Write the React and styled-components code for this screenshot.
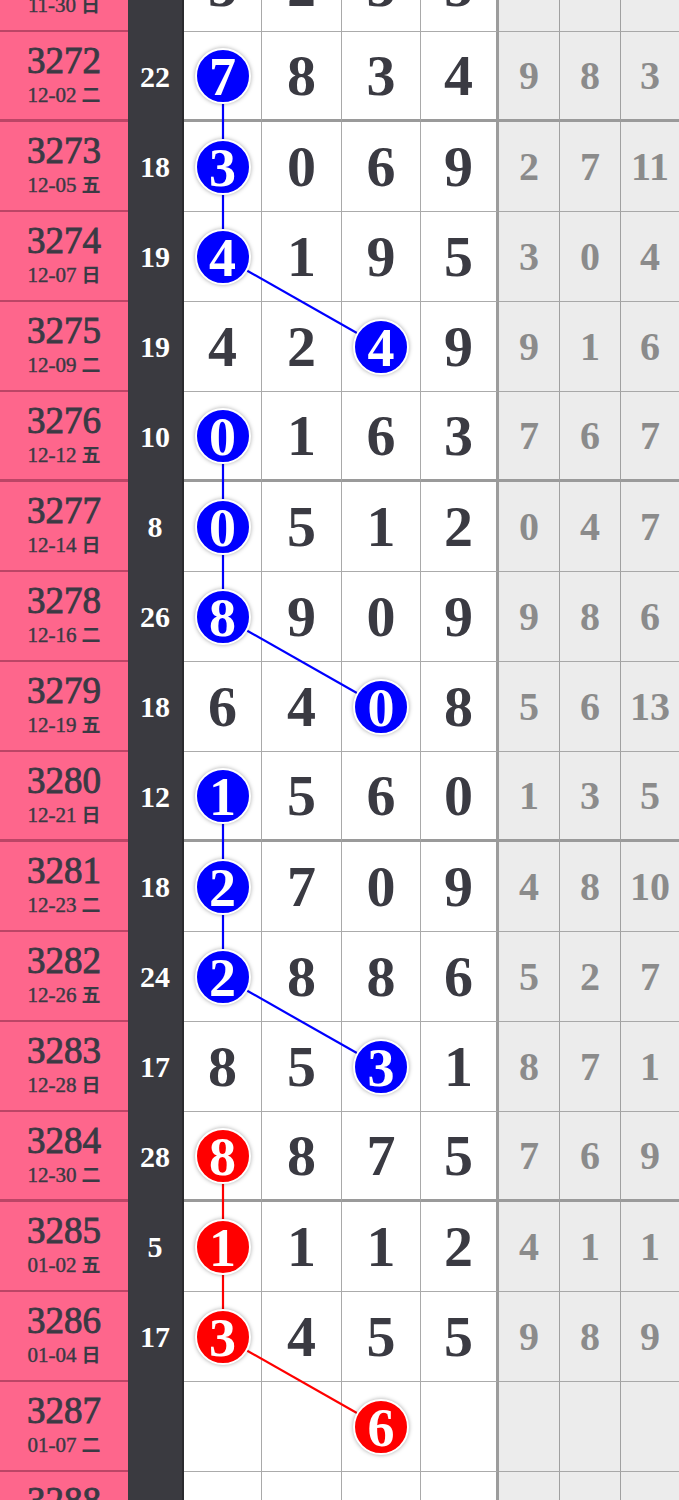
import React from "react";
import styled, { createGlobalStyle } from "styled-components";

const Global = createGlobalStyle`
  html, body { margin: 0; padding: 0; background: #ffffff; }
  body { overflow: hidden; }
`;

const SERIF = `"Liberation Serif", "Noto Sans CJK SC", serif`;
const COLS = [128, 56, 78, 80, 79, 78, 61, 61, 58];
const ROW_H = 90;
const TOP_OFFSET = -58;

const rows = [
  { no: 3271, date: "11-30", wd: "日", sum: "15", d: [3, 2, 3, 5], g: [2, 4, 7], hit: null },
  { no: 3272, date: "12-02", wd: "二", sum: "22", d: [7, 8, 3, 4], g: [9, 8, 3], hit: { col: 0, color: "blue" } },
  { no: 3273, date: "12-05", wd: "五", sum: "18", d: [3, 0, 6, 9], g: [2, 7, 11], hit: { col: 0, color: "blue" } },
  { no: 3274, date: "12-07", wd: "日", sum: "19", d: [4, 1, 9, 5], g: [3, 0, 4], hit: { col: 0, color: "blue" } },
  { no: 3275, date: "12-09", wd: "二", sum: "19", d: [4, 2, 4, 9], g: [9, 1, 6], hit: { col: 2, color: "blue" } },
  { no: 3276, date: "12-12", wd: "五", sum: "10", d: [0, 1, 6, 3], g: [7, 6, 7], hit: { col: 0, color: "blue" } },
  { no: 3277, date: "12-14", wd: "日", sum: "8", d: [0, 5, 1, 2], g: [0, 4, 7], hit: { col: 0, color: "blue" } },
  { no: 3278, date: "12-16", wd: "二", sum: "26", d: [8, 9, 0, 9], g: [9, 8, 6], hit: { col: 0, color: "blue" } },
  { no: 3279, date: "12-19", wd: "五", sum: "18", d: [6, 4, 0, 8], g: [5, 6, 13], hit: { col: 2, color: "blue" } },
  { no: 3280, date: "12-21", wd: "日", sum: "12", d: [1, 5, 6, 0], g: [1, 3, 5], hit: { col: 0, color: "blue" } },
  { no: 3281, date: "12-23", wd: "二", sum: "18", d: [2, 7, 0, 9], g: [4, 8, 10], hit: { col: 0, color: "blue" } },
  { no: 3282, date: "12-26", wd: "五", sum: "24", d: [2, 8, 8, 6], g: [5, 2, 7], hit: { col: 0, color: "blue" } },
  { no: 3283, date: "12-28", wd: "日", sum: "17", d: [8, 5, 3, 1], g: [8, 7, 1], hit: { col: 2, color: "blue" } },
  { no: 3284, date: "12-30", wd: "二", sum: "28", d: [8, 8, 7, 5], g: [7, 6, 9], hit: { col: 0, color: "red" } },
  { no: 3285, date: "01-02", wd: "五", sum: "5", d: [1, 1, 1, 2], g: [4, 1, 1], hit: { col: 0, color: "red" } },
  { no: 3286, date: "01-04", wd: "日", sum: "17", d: [3, 4, 5, 5], g: [9, 8, 9], hit: { col: 0, color: "red" } },
  { no: 3287, date: "01-07", wd: "二", sum: "", d: ["", "", 6, ""], g: ["", "", ""], hit: { col: 2, color: "red" } },
  { no: 3288, date: "01-09", wd: "日", sum: "", d: ["", "", "", ""], g: ["", "", ""], hit: null },
];

const THICK_AFTER = new Set([3272, 3276, 3280, 3284]);
const GROUPS = [
  [3272, 3275],
  [3276, 3279],
  [3280, 3283],
  [3284, 3287],
];

const COLOR = { blue: "#0000ff", red: "#ff0000" };

const Board = styled.div`
  position: relative;
  width: 679px;
  margin-top: ${TOP_OFFSET}px;
  font-family: ${SERIF};
`;

const Row = styled.div`
  display: grid;
  grid-template-columns: ${COLS.map((c) => c + "px").join(" ")};
  height: ${ROW_H}px;
`;

const IssueCell = styled.div`
  box-sizing: border-box;
  background: #fe668c;
  border-bottom: ${(p) => (p.$thick ? "3px" : "2px")} solid rgba(90, 20, 45, 0.4);
  display: flex;
  flex-direction: column;
  align-items: center;
  justify-content: center;
  color: #3a3a44;
  padding-bottom: 2px;
`;

const IssueNo = styled.div`
  font-size: 37px;
  line-height: 36px;
  font-weight: 400;
  -webkit-text-stroke: 0.9px #3a3a44;
`;

const IssueDate = styled.div`
  font-size: 21px;
  line-height: 24px;
  margin-top: 3px;
  font-weight: 400;
  -webkit-text-stroke: 0.4px #3a3a44;
  span {
    font-family: "Noto Sans CJK SC", sans-serif;
    font-weight: 700;
    font-size: 19px;
    margin-left: 5px;
    -webkit-text-stroke: 0;
  }
`;

const SumCell = styled.div`
  box-sizing: border-box;
  background: #3a3a40;
  border-right: 2px solid #2a2a2e;
  color: #ffffff;
  display: flex;
  align-items: center;
  justify-content: center;
  font-size: 30px;
  font-weight: 700;
`;

const DigitCell = styled.div`
  box-sizing: border-box;
  background: #ffffff;
  border-right: ${(p) => (p.$last ? "3px solid #9c9c9c" : "1px solid #a9a9a9")};
  border-bottom: ${(p) => (p.$thick ? "3px solid #9a9a9a" : "1px solid #ababab")};
  display: flex;
  align-items: center;
  justify-content: center;
  color: #3a3a42;
  font-size: 58px;
  font-weight: 700;
`;

const GrayCell = styled.div`
  box-sizing: border-box;
  background: #ececec;
  border-right: ${(p) => (p.$last ? "none" : "1px solid #a0a0a0")};
  border-bottom: ${(p) => (p.$thick ? "3px solid #9a9a9a" : "1px solid #a8a8a8")};
  display: flex;
  align-items: center;
  justify-content: center;
  color: #8b8b8b;
  font-size: 40px;
  font-weight: 700;
`;

const Ball = styled.div`
  position: relative;
  z-index: 2;
  box-sizing: border-box;
  width: 56px;
  height: 56px;
  border-radius: 50%;
  background: ${(p) => COLOR[p.$color]};
  border: 2.5px solid #ffffff;
  box-shadow: 0 0 4px rgba(0, 0, 0, 0.35);
  color: #ffffff;
  display: flex;
  align-items: center;
  justify-content: center;
  font-size: 54px;
  line-height: 1;
  font-weight: 700;
  padding-top: 2px;
`;

const Lines = styled.svg`
  position: absolute;
  left: 0;
  top: 0;
  z-index: 1;
  pointer-events: none;
`;

const colCenter = (col) => {
  let x = COLS[0] + COLS[1];
  for (let i = 0; i < col; i++) x += COLS[2 + i];
  return x + COLS[2 + col] / 2;
};

export default function App() {
  const idx = (no) => rows.findIndex((r) => r.no === no);
  const segs = [];
  GROUPS.forEach(([a, b]) => {
    for (let n = a; n < b; n++) {
      const r1 = rows[idx(n)];
      const r2 = rows[idx(n + 1)];
      if (!r1.hit || !r2.hit) continue;
      segs.push({
        x1: colCenter(r1.hit.col),
        y1: idx(n) * ROW_H + ROW_H / 2,
        x2: colCenter(r2.hit.col),
        y2: idx(n + 1) * ROW_H + ROW_H / 2,
        color: COLOR[r1.hit.color],
      });
    }
  });
  const totalH = rows.length * ROW_H;

  return (
    <>
      <Global />
      <Board>
        <Lines width="679" height={totalH} viewBox={`0 0 679 ${totalH}`}>
          {segs.map((s, i) => (
            <line key={i} x1={s.x1} y1={s.y1} x2={s.x2} y2={s.y2} stroke={s.color} strokeWidth="2.2" />
          ))}
        </Lines>
        {rows.map((r) => {
          const thick = THICK_AFTER.has(r.no);
          return (
            <Row key={r.no}>
              <IssueCell $thick={thick}>
                <IssueNo>{r.no}</IssueNo>
                <IssueDate>
                  {r.date}
                  <span>{r.wd}</span>
                </IssueDate>
              </IssueCell>
              <SumCell>{r.sum}</SumCell>
              {r.d.map((v, i) => (
                <DigitCell key={i} $thick={thick} $last={i === 3}>
                  {r.hit && r.hit.col === i ? (
                    <Ball $color={r.hit.color}>{v}</Ball>
                  ) : (
                    v
                  )}
                </DigitCell>
              ))}
              {r.g.map((v, i) => (
                <GrayCell key={i} $thick={thick} $last={i === 2}>
                  {v}
                </GrayCell>
              ))}
            </Row>
          );
        })}
      </Board>
    </>
  );
}
